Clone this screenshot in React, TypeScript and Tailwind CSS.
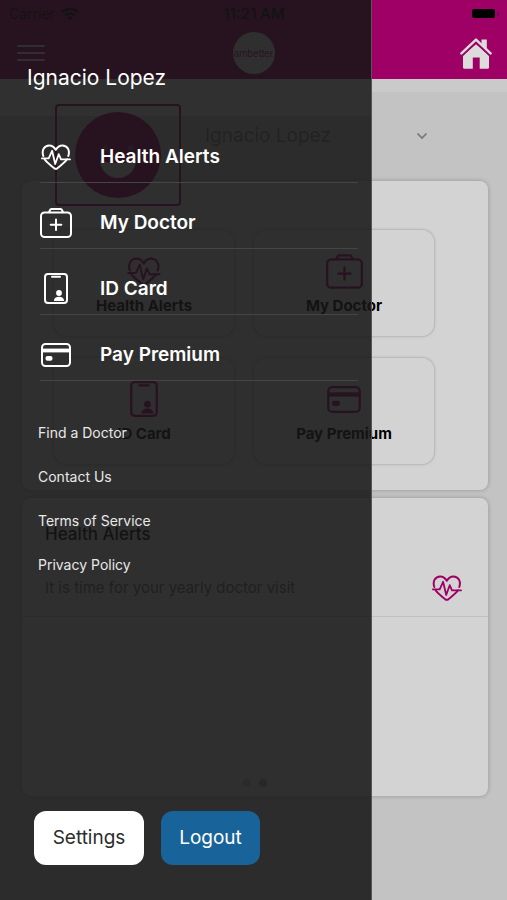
import type { ReactNode } from "react";

type IconProps = { className?: string };

function HeartPulse({ className }: IconProps) {
  return (
    <svg viewBox="0 0 30 26" className={className} fill="none" stroke="currentColor" strokeWidth="2" strokeLinecap="round" strokeLinejoin="round" aria-hidden="true">
      <path d="M2.300 12C.3 6 3.400 1.400 8.200 1.400c2.700 0 5 1.500 6.600 4.400 1.600-2.900 3.900-4.400 6.600-4.400 4.800 0 7.900 4.600 5.900 10.600" />
      <path d="M3.600 15.300c2.200 3.300 6.100 5.900 9.700 9q1.500 1 3 0c3.600-3.100 7.500-5.700 9.700-9" />
      <path strokeWidth="1.800" d="M.9 14.400h6.800l3.400-7.600 3.100 13.200 3.500-9.800 2.300 5.200h9" />
    </svg>
  );
}

function DoctorBag({ className }: IconProps) {
  return (
    <svg viewBox="0 0 32 30" className={className} fill="none" stroke="currentColor" strokeWidth="2" strokeLinecap="round" strokeLinejoin="round" aria-hidden="true">
      <rect x="1" y="4.500" width="30" height="24.500" rx="3.500" />
      <path d="M9 4.200 10.200 1.800Q10.700 1 11.700 1h8.600q1 0 1.500.8L23 4.200M16 11.500v10.500M10.700 16.800h10.600" />
    </svg>
  );
}

function IdBadge({ className }: IconProps) {
  return (
    <svg viewBox="0 0 24 31" className={className} fill="none" stroke="currentColor" strokeWidth="2" aria-hidden="true">
      <rect x="1" y="1" width="22" height="29" rx="3" />
      <path d="M8 3.800h8" strokeLinecap="round" />
      <circle cx="15" cy="20" r="2.900" fill="currentColor" stroke="none" />
      <path d="M9.800 28c.2-3 2.300-4.300 5.200-4.300s5 1.300 5.200 4.300z" fill="currentColor" stroke="none" />
    </svg>
  );
}

function PayCard({ className }: IconProps) {
  return (
    <svg viewBox="0 0 30 24" className={className} fill="none" stroke="currentColor" strokeWidth="2" aria-hidden="true">
      <rect x="1" y="1" width="28" height="22" rx="3.500" />
      <path d="M1 7.500h28" strokeWidth="3.800" />
      <rect x="4.500" y="13" width="7" height="4.800" rx="2" fill="currentColor" stroke="none" />
    </svg>
  );
}

function HomeIcon({ className }: IconProps) {
  return (
    <svg viewBox="0 0 32 31" className={className} fill="currentColor" aria-hidden="true">
      <path d="M16 6.200 29 17.600V29.500q0 1.300-1.300 1.300h-8V19.500h-6.900v11.300h-8Q3 30.800 3 29.500V17.600z" />
      <path d="M21.500 1.500h5.300v10.500l-5.300-5z" />
      <path d="M2.600 17.400 16 4.600 29.400 17.400" fill="none" stroke="#9e0065" strokeWidth="1.400" />
      <path d="M1.400 15.400 16 1.600 30.600 15.400" fill="none" stroke="currentColor" strokeWidth="2.400" strokeLinecap="round" strokeLinejoin="round" />
    </svg>
  );
}

function WifiIcon({ className }: IconProps) {
  return (
    <svg viewBox="0 0 18 14" className={className} fill="none" stroke="currentColor" strokeWidth="2.600" aria-hidden="true">
      <path d="M1 5.300a11.500 11.500 0 0 1 16 0M4 8.500a7.200 7.200 0 0 1 10 0" />
      <path d="M9 13.500 6.300 10.800a3.900 3.900 0 0 1 5.400 0z" fill="currentColor" stroke="none" />
    </svg>
  );
}

const tiles: { label: string; icon: ReactNode }[] = [
  { label: "Health Alerts", icon: <HeartPulse className="h-[29px] w-[34px]" /> },
  { label: "My Doctor", icon: <DoctorBag className="h-[35px] w-[37px]" /> },
  { label: "ID Card", icon: <IdBadge className="h-9 w-7" /> },
  { label: "Pay Premium", icon: <PayCard className="h-[27px] w-[34px]" /> },
];

const menu: { label: string; icon: ReactNode }[] = [
  { label: "Health Alerts", icon: <HeartPulse className="h-[26px] w-[30px]" /> },
  { label: "My Doctor", icon: <DoctorBag className="h-[30px] w-8" /> },
  { label: "ID Card", icon: <IdBadge className="h-[31px] w-6" /> },
  { label: "Pay Premium", icon: <PayCard className="h-6 w-[30px]" /> },
];

const links = ["Find a Doctor", "Contact Us", "Terms of Service", "Privacy Policy"];

function Dashboard() {
  return (
    <div className="flex min-h-screen flex-col">
      <header className="h-[79px] bg-[#9e0065]">
        <div className="grid h-[27px] grid-cols-3 items-center pl-[9px] pr-2 text-[15px] leading-4 text-black">
          <span className="flex items-center gap-[6px] text-[14px]">
            Carrier
            <WifiIcon className="h-[14px] w-[18px]" />
          </span>
          <span className="text-center font-semibold">11:21 AM</span>
          <span className="flex items-center justify-end gap-[2px]">
            <span className="h-[9px] w-[23px] rounded-[2px] bg-black" />
            <span className="h-1 w-[2px] rounded-r bg-[#6c0050]" />
          </span>
        </div>
        <div className="grid h-[52px] grid-cols-3 items-center pl-[17px] pr-[15px]">
          <button type="button" aria-label="Menu" className="flex w-7 flex-col gap-[5px]">
            <span className="h-[2px] rounded bg-[#d6d6d6]" />
            <span className="h-[2px] rounded bg-[#d6d6d6]" />
            <span className="h-[2px] rounded bg-[#d6d6d6]" />
          </button>
          <div className="flex size-[42px] items-center justify-center justify-self-center rounded-full bg-[#d3d3d3] font-['Liberation_Sans_Narrow','Liberation_Sans',sans-serif] text-[10px] text-[#9e0065]">
            ambetter.
          </div>
          <button type="button" aria-label="Home" className="justify-self-end text-[#dcdcdc]">
            <HomeIcon className="h-[31px] w-8" />
          </button>
        </div>
      </header>

      <div className="flex h-[25px] items-start">
        <div className="h-[37px] w-[372px] shrink-0 bg-[#dcdcdc]" />
        <div className="h-[13px] flex-1 bg-[#cacaca]" />
      </div>

      <section className="relative flex h-[77px] items-start pl-[55px] pr-[79px]">
        <div className="flex h-[102px] w-[126px] shrink-0 items-center justify-center rounded border-2 border-[#9e0065]">
          <div className="flex size-[86px] items-center justify-center rounded-full bg-[#9e0065] pt-[10px]">
            <svg viewBox="0 0 36 36" className="size-9 text-[#d3d3d3]" fill="currentColor" aria-hidden="true">
              <path d="M0 18q5 3 18 3t18-3a18 18 0 0 1-36 0z" />
              <circle cx="5" cy="6" r="3" fill="#88406e" />
              <circle cx="31" cy="6" r="3" fill="#88406e" />
            </svg>
          </div>
        </div>
        <h2 className="ml-6 mt-5 text-[19px] leading-6 text-[#777]">Ignacio Lopez</h2>
        <button type="button" aria-label="Switch member" className="ml-auto mt-[26px] flex h-3 w-3 items-center justify-center">
          <svg viewBox="0 0 12 8" className="h-2 w-3" fill="none" stroke="#777" strokeWidth="1.700" aria-hidden="true">
            <path d="m1.500 1.500 4.500 4.500 4.500-4.500" />
          </svg>
        </button>
      </section>

      <main className="flex flex-col gap-2 pl-[22px] pr-[19px]">
        <section className="grid grid-cols-2 gap-x-5 gap-y-[22px] rounded-lg bg-[#d3d3d3] pb-[26px] pl-8 pr-[54px] pt-[49px] shadow-[0_0_4px_rgba(0,0,0,0.25)]">
          {tiles.map((tile) => (
            <button key={tile.label} type="button" className="flex h-[106px] flex-col items-center rounded-xl pt-[23px] shadow-[0_0_3px_rgba(0,0,0,0.3)]">
              <span className="flex h-9 items-center text-[#9e0065]">{tile.icon}</span>
              <span className="mt-[7px] text-[15px] font-bold leading-5 text-black">{tile.label}</span>
            </button>
          ))}
        </section>

        <section className="flex h-[298px] flex-col rounded-lg bg-[#d3d3d3] shadow-[0_0_4px_rgba(0,0,0,0.25)]">
          <div className="h-[119px] border-b border-[#c0c0c0] pl-[23px] pr-[26px] pt-6">
            <h3 className="text-[17px] font-medium leading-6 text-black">Health Alerts</h3>
            <div className="mt-[26px] flex h-8 items-center justify-between">
              <p className="text-[15px] leading-5 text-[#666]">It is time for your yearly doctor visit</p>
              <HeartPulse className="h-[26px] w-[30px] text-[#9e0065]" />
            </div>
          </div>
          <div className="mt-auto flex justify-center gap-2 pb-[9px]">
            <span className="size-2 rounded-full bg-[#b0b0b0]" />
            <span className="size-2 rounded-full bg-[#999]" />
          </div>
        </section>
      </main>
    </div>
  );
}

function Drawer() {
  return (
    <aside className="absolute inset-y-0 left-0 flex w-[372px] max-w-full flex-col border-r border-[#555] bg-[#161616]/87 pb-[35px] pt-[66px] text-white">
      <h1 className="pl-[27px] text-[21px] leading-6">Ignacio Lopez</h1>
      <nav aria-label="Main" className="mt-[27px] pl-10 pr-[13px]">
        {menu.map((item) => (
          <a key={item.label} href="#" className="flex h-[66px] items-center border-b border-[#454545] pt-[14px]">
            <span className="flex w-8 justify-center">{item.icon}</span>
            <span className="ml-7 text-[19px] font-semibold leading-6">{item.label}</span>
          </a>
        ))}
      </nav>
      <nav aria-label="Support" className="mt-[30px] flex flex-col pl-[38px]">
        {links.map((label) => (
          <a key={label} href="#" className="flex h-11 items-center self-start text-[14px] leading-5 text-[#e8e8e8]">
            {label}
          </a>
        ))}
      </nav>
      <div className="mt-auto flex gap-[17px] pl-[34px] text-[19px] leading-6">
        <button type="button" className="h-[54px] w-[110px] rounded-xl bg-white text-[#2c2c2c]">Settings</button>
        <button type="button" className="h-[54px] w-[99px] rounded-xl bg-[#18649a] text-white">Logout</button>
      </div>
    </aside>
  );
}

export default function App() {
  return (
    <div className="relative min-h-screen overflow-hidden bg-[#c3c3c3] font-[Inter,'Liberation_Sans',sans-serif]">
      <Dashboard />
      <Drawer />
    </div>
  );
}
